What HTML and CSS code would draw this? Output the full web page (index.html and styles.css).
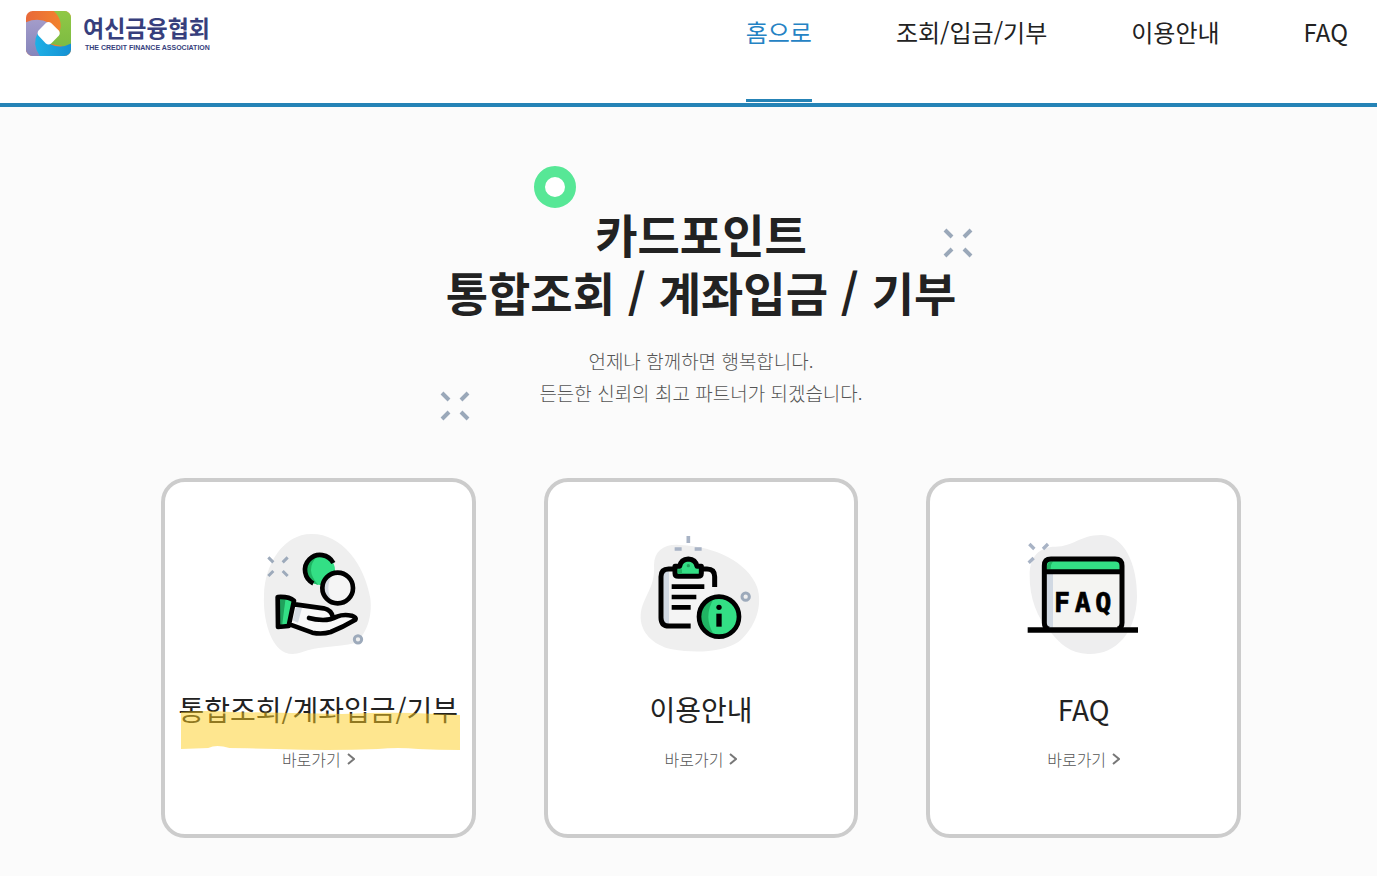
FILE: index.html
```html
<!DOCTYPE html>
<html lang="ko">
<head>
    <meta charset="UTF-8">
    <meta name="viewport" content="width=device-width, initial-scale=1.0">
    <title>카드포인트 통합조회</title>
    <link rel="stylesheet" href="styles.css">
</head>

<body>
    <header class="header">
        <a class="logo" href="#">
            <svg class="logo-mark" viewBox="0 0 136 136" aria-hidden="true">
                <defs>
                    <clipPath id="mark"><rect width="136" height="136" rx="20"/></clipPath>
                    <linearGradient id="orange"><stop offset="0" stop-color="#e8693a"/><stop offset="1" stop-color="#f58a2a"/></linearGradient>
                    <linearGradient id="green" x2="0" y2="1"><stop offset="0" stop-color="#90c846"/><stop offset="1" stop-color="#7dbb42"/></linearGradient>
                    <linearGradient id="blue"><stop offset="0" stop-color="#1fb0e6"/><stop offset="1" stop-color="#1590d2"/></linearGradient>
                    <linearGradient id="purple" x2="0" y2="1"><stop offset="0" stop-color="#a39cca"/><stop offset="1" stop-color="#8585bb"/></linearGradient>
                </defs>
                <g clip-path="url(#mark)">
                    <rect width="136" height="136" fill="url(#orange)"/>
                    <path d="M84 0H136V110L68 98L100 66Q115 30 84 0Z" fill="url(#green)"/>
                    <path d="M0 34Q36 18 70 36L36 67L60 136H0Z" fill="url(#purple)"/>
                    <path d="M36 66L68 98Q104 116 136 98V136H42Q16 100 36 66Z" fill="url(#blue)"/>
                    <path d="M60 36Q68 30 76 36L99 59Q105 67 99 75L76 98Q68 104 60 98L38 75Q32 67 38 59Z" fill="#fff"/>
                </g>
            </svg>
            <span class="logo-text">
                <strong class="logo-name">여신금융협회</strong>
                <span class="logo-sub">THE CREDIT FINANCE ASSOCIATION</span>
            </span>
        </a>
        <nav class="nav">
            <a class="nav-link active" href="#">홈으로</a>
            <a class="nav-link" href="#">조회/입금/기부</a>
            <a class="nav-link" href="#">이용안내</a>
            <a class="nav-link" href="#">FAQ</a>
        </nav>
    </header>

    <main class="main">
        <section class="hero">
            <span class="ring"></span>
            <svg class="spark spark-right" viewBox="0 0 30 30" aria-hidden="true">
                <path d="M2 2L9 9M28 2L21 9M2 28L9 21M28 28L21 21"/>
            </svg>
            <svg class="spark spark-left" viewBox="0 0 30 30" aria-hidden="true">
                <path d="M2 2L9 9M28 2L21 9M2 28L9 21M28 28L21 21"/>
            </svg>
            <h1 class="hero-title">카드포인트<br>통합조회 / 계좌입금 / 기부</h1>
            <p class="hero-text">언제나 함께하면 행복합니다.<br>든든한 신뢰의 최고 파트너가 되겠습니다.</p>
        </section>

        <section class="cards">
            <article class="card">
                <!-- 손 위의 동전 -->
                <svg class="card-icon" viewBox="-4 0 420 420" aria-hidden="true">
                    <path d="M44 225C46 130 105 42 185 42C275 40 345 130 363 235C370 292 350 345 318 369C260 383 205 377 157 397C110 412 84 390 65 350C49 313 42 270 44 225Z" fill="#efefef"/>
                    <path d="M57 112L72 127M115 112L100 127M57 168L72 153M115 168L100 153" stroke="#9daabb" stroke-width="9"/>
                    <circle cx="212" cy="150" r="45" fill="#33df85"/>
                    <path d="M205 107A45 45 0 0 0 190 188L207 195Q164 148 205 107Z" fill="#20b463"/>
                    <path d="M192 190A45 45 0 1 1 252 129" fill="none" stroke="#000" stroke-width="14"/>
                    <circle cx="265" cy="204" r="46" fill="#f5f5f5"/>
                    <path d="M251 160Q220 170 219 204Q220 239 251 248Q223 205 251 160Z" fill="#d5dbe3"/>
                    <circle cx="265" cy="204" r="46" fill="none" stroke="#000" stroke-width="14"/>
                    <path d="M137 254L225 266Q247 270 251 294L285 285Q307 283 321 297Q275 322 243 337Q220 345 192 340L121 313Z" fill="#f8f8f8"/>
                    <path d="M140 261L158 264L146 308L130 301Z" fill="#d5dbe3"/>
                    <path d="M83 230L118 231L134 242L118 319L84 322Z" fill="#33df85"/>
                    <path d="M87 233H109L98 319H87Z" fill="#20a25c"/>
                    <path d="M85 231Q119 229 134 242L118 318L86 321ZM137 253L223 265Q247 270 251 293M179 294Q197 299 221 300Q244 300 263 290Q282 282 307 287Q322 293 318 299Q281 321 244 336Q218 344 189 338L121 313" fill="none" stroke="#000" stroke-width="14" stroke-linejoin="round" stroke-linecap="round"/>
                    <circle cx="326" cy="358" r="11" fill="#efefef" stroke="#9daabb" stroke-width="9"/>
                </svg>
                <h2 class="card-title">통합조회/계좌입금/기부
                    <svg class="marker" viewBox="0 0 277 39" preserveAspectRatio="none" aria-hidden="true">
                        <path d="M0 1Q25 -1 50 1L110 2L160 3Q200 1 230 2L277 4V39Q255 39 235 38Q215 36 195 38Q145 40 95 38Q60 37 48 37Q35 33 27 37L0 38Z"/>
                    </svg>
                </h2>
                <a class="card-link" href="#">바로가기
                    <svg class="arrow" viewBox="0 0 8 12" aria-hidden="true"><path d="M1 1L7 6L1 11"/></svg>
                </a>
            </article>

            <article class="card">
                <!-- 클립보드 -->
                <svg class="card-icon" viewBox="2 -15 420 420" aria-hidden="true">
                    <path d="M71 120C72 75 105 53 160 61C250 65 350 110 380 185C399 240 375 310 325 350C275 381 200 386 125 373C67 361 28 320 31 270C35 217 76 190 71 120Z" fill="#efefef"/>
                    <path d="M174 33V54M133 72H154M193 72H214" stroke="#a8b3c5" stroke-width="11"/>
                    <circle cx="346" cy="215" r="11" fill="#efefef" stroke="#9daabb" stroke-width="9"/>
                    <path d="M92 150Q92 134 111 132H237Q252 135 252 150V228L181 303H112Q94 303 92 283Z" fill="#f4f4f4"/>
                    <path d="M99 139H116V296H99Z" fill="#d1d9e3"/>
                    <path d="M181 303H116Q92 303 92 278V155Q92 132 115 132H133M215 132H230Q253 132 253 155V186" fill="none" stroke="#000" stroke-width="15"/>
                    <path d="M134 124H148Q152 103 174 102Q196 103 200 124H213V145Q213 154 203 154H144Q134 154 134 145Z" fill="#33df85" stroke="#000" stroke-width="15" stroke-linejoin="round"/>
                    <path d="M142 133H155V147H146Q142 147 142 142Z" fill="#20b463"/>
                    <circle cx="174" cy="122" r="5" fill="#20a25c"/>
                    <path d="M124 185H222M124 216H198M124 247H181" stroke="#000" stroke-width="14"/>
                    <circle cx="266" cy="275" r="60" fill="#33df85"/>
                    <path d="M251 220Q207 232 209 275Q211 319 251 330Q217 276 251 220Z" fill="#20b463"/>
                    <circle cx="266" cy="275" r="60" fill="none" stroke="#000" stroke-width="14"/>
                    <circle cx="266" cy="247" r="8"/>
                    <path d="M258 266H274V305H258Z"/>
                </svg>
                <h2 class="card-title">이용안내</h2>
                <a class="card-link" href="#">바로가기
                    <svg class="arrow" viewBox="0 0 8 12" aria-hidden="true"><path d="M1 1L7 6L1 11"/></svg>
                </a>
            </article>

            <article class="card">
                <!-- FAQ 창 -->
                <svg class="card-icon" viewBox="-4 -15 420 420" aria-hidden="true">
                    <path d="M43 150C43 95 72 65 120 65C175 65 195 29 260 30C325 32 366 115 365 215C363 325 299 390 218 387C165 385 135 358 106 322C64 280 42 215 43 150Z" fill="#eeeeef"/>
                    <path d="M42 57L57 72M98 57L83 72M40 113L55 99" stroke="#a8b3c5" stroke-width="10"/>
                    <path d="M87 140H317V308H87Z" fill="#f4f4f2"/>
                    <path d="M94 147H113V308H94Z" fill="#d1d9e3"/>
                    <path d="M87 140V121Q87 102 106 102H299Q320 102 320 121V140Z" fill="#33df85"/>
                    <path d="M94 133Q94 109 113 109Q105 119 106 133Z" fill="#20b463"/>
                    <path d="M101 312Q87 309 87 293V122Q87 102 107 102H299Q320 102 320 122V293Q320 309 307 312M87 140H320" fill="none" stroke="#000" stroke-width="15"/>
                    <path d="M37 315H368" stroke="#000" stroke-width="16"/>
                    <text class="icon-text" x="116 178 240" y="261">FAQ</text>
                </svg>
                <h2 class="card-title">FAQ</h2>
                <a class="card-link" href="#">바로가기
                    <svg class="arrow" viewBox="0 0 8 12" aria-hidden="true"><path d="M1 1L7 6L1 11"/></svg>
                </a>
            </article>
        </section>
    </main>
</body>
</html>
```
FILE: styles.css
```css
* {
    margin: 0;
    padding: 0;
    box-sizing: border-box;
}

body {
    background-color: #fbfbfb;
    color: #222;
    font-family: "Noto Sans CJK KR", sans-serif;
}

a {
    color: inherit;
    text-decoration: none;
}

/* header */
.header {
    display: flex;
    justify-content: space-between;
    align-items: stretch;
    padding: 0 29px 0 26px;
    background-color: #fff;
    border-bottom: 4px solid #2583b6;
}

.logo {
    display: flex;
    align-items: flex-start;
    gap: 12px;
    padding-top: 11px;
    color: #373f7d;
}

.logo-mark {
    width: 45px;
    height: 45px;
}

.logo-text {
    display: flex;
    flex-direction: column;
}

.logo-name {
    font-size: 23px;
    line-height: 32px;
}

.logo-sub {
    padding-left: 2px;
    font-family: "Liberation Sans", sans-serif;
    font-size: 7px;
    font-weight: 700;
    line-height: 10px;
}

.nav {
    display: flex;
    gap: 84px;
}

.nav-link {
    height: 102px;
    margin-bottom: 1px;
    padding-top: 16px;
    font-size: 24px;
    line-height: 32px;
}

.nav-link.active {
    color: #2583c4;
    border-bottom: 3px solid #2583b6;
}

/* main */
.main {
    max-width: 1105px;
    margin: 0 auto;
    padding: 97px 0 38px 25px;
}

.hero {
    position: relative;
    text-align: center;
}

.hero-title {
    font-size: 46px;
    font-weight: 700;
    line-height: 58px;
}

.hero-text {
    margin-top: 25px;
    color: #555;
    font-size: 19px;
    font-weight: 300;
    line-height: 32px;
}

.ring {
    position: absolute;
    top: -38px;
    left: calc(50% - 167px);
    width: 42px;
    height: 42px;
    border: 11px solid #57e796;
    border-radius: 50%;
    background-color: #fff;
}

.spark {
    position: absolute;
    width: 30px;
    height: 30px;
    fill: none;
    stroke: #9aa8b9;
    stroke-width: 4;
}

.spark-right {
    top: 24px;
    left: calc(50% + 242px);
}

.spark-left {
    top: 187px;
    left: calc(50% - 261px);
}

/* cards */
.cards {
    display: grid;
    grid-template-columns: repeat(3, 1fr);
    gap: 68px;
    margin-top: 69px;
}

.card {
    display: flex;
    flex-direction: column;
    align-items: center;
    padding: 38px 0 63px;
    background-color: #fff;
    border: 4px solid #ccc;
    border-radius: 24px;
}

.card-icon {
    width: 140px;
    height: 140px;
}

.icon-text {
    fill: #000;
    stroke: #000;
    stroke-width: 2px;
    font-family: "DejaVu Sans Mono", monospace;
    font-size: 80px;
    font-weight: 700;
}

.card-title {
    position: relative;
    margin-top: 29px;
    font-size: 28px;
    font-weight: 400;
    line-height: 40px;
    white-space: nowrap;
}

.marker {
    position: absolute;
    top: 22px;
    left: 2px;
    width: 100%;
    height: 39px;
    fill: rgba(253, 206, 31, .5);
}

.card-link {
    display: flex;
    align-items: center;
    gap: 6px;
    margin-top: 18px;
    color: #555;
    font-size: 16px;
    font-weight: 300;
    line-height: 24px;
}

.arrow {
    width: 8px;
    height: 12px;
    fill: none;
    stroke: #777;
    stroke-width: 2;
}
```
